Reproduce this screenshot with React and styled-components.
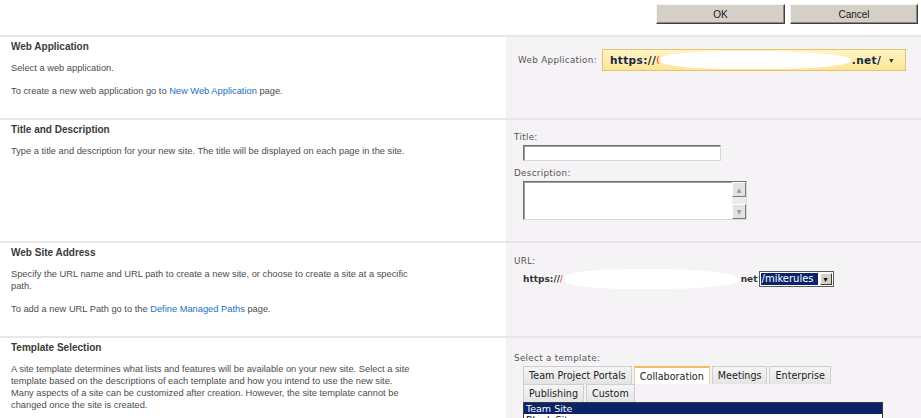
import styled, { createGlobalStyle } from 'styled-components';

const GlobalStyle = createGlobalStyle`
    body {
        margin: 0;
        background: #FFFFFF;
        font-family: 'Liberation Sans', Arial, sans-serif;
    }
`;

export default function App() {
    return (
        <Page>
            <GlobalStyle />
            <TopBar>
                <Button>OK</Button>
                <Button wide>Cancel</Button>
            </TopBar>

            <Section height={83}>
                <Left>
                    <Heading>Web Application</Heading>
                    <Text>Select a web application.</Text>
                    <Text>To create a new web application go to <Link>New Web Application</Link> page.</Text>
                </Left>
                <Right>
                    <InlineRow top={12}>
                        <Label>Web Application:</Label>
                        <AppSelect>
                            <strong>https://</strong>
                            <Red>(</Red>
                            <Blot width={190} />
                            <strong>.net/</strong>
                            <Caret>▾</Caret>
                        </AppSelect>
                    </InlineRow>
                </Right>
            </Section>

            <Section height={123}>
                <Left>
                    <Heading>Title and Description</Heading>
                    <Text>Type a title and description for your new site. The title will be displayed on each page in the site.</Text>
                </Left>
                <Right>
                    <Label block top={11}>Title:</Label>
                    <TextInput />
                    <Label block top={6}>Description:</Label>
                    <TextArea>
                        <Scroll>
                            <ScrollBtn>▲</ScrollBtn>
                            <ScrollBtn>▼</ScrollBtn>
                        </Scroll>
                    </TextArea>
                </Right>
            </Section>

            <Section height={95}>
                <Left>
                    <Heading>Web Site Address</Heading>
                    <Text>Specify the URL name and URL path to create a new site, or choose to create a site at a specific<br />path.</Text>
                    <Text>To add a new URL Path go to the <Link>Define Managed Paths</Link> page.</Text>
                </Left>
                <Right>
                    <Label block top={12}>URL:</Label>
                    <UrlRow>
                        <UrlBase>https://</UrlBase>
                        <Red small>/</Red>
                        <Blot width={176} tall />
                        <UrlBase>net</UrlBase>
                        <PathSelect>
                            <Picked>/mikerules</Picked>
                            <DropBtn>▾</DropBtn>
                        </PathSelect>
                    </UrlRow>
                </Right>
            </Section>

            <Section height={90}>
                <Left>
                    <Heading>Template Selection</Heading>
                    <Text>A site template determines what lists and features will be available on your new site. Select a site<br />template based on the descriptions of each template and how you intend to use the new site.<br />Many aspects of a site can be customized after creation. However, the site template cannot be<br />changed once the site is created.</Text>
                </Left>
                <Right>
                    <Label block top={14}>Select a template:</Label>
                    <TabArea>
                        <Tabs>
                            <Tab>Team Project Portals</Tab>
                            <Tab active>Collaboration</Tab>
                            <Tab>Meetings</Tab>
                            <Tab>Enterprise</Tab>
                        </Tabs>
                        <Tabs>
                            <Tab>Publishing</Tab>
                            <Tab>Custom</Tab>
                        </Tabs>
                    </TabArea>
                    <ListBox>
                        <Option selected>Team Site</Option>
                        <Option>Blank Site</Option>
                    </ListBox>
                </Right>
            </Section>
        </Page>
    );
}

const Page = styled.div`
    width: 921px;
    height: 418px;
    overflow: hidden;
    background: #FFFFFF;
`;

const TopBar = styled.div`
    height: 35px;
    display: flex;
    justify-content: flex-end;
    align-items: flex-start;
    gap: 5px;
    padding: 4px 3px 0 0;
    box-sizing: border-box;
`;

const Button = styled.button`
    width: ${p => p.wide ? 128 : 129}px;
    height: 20px;
    padding: 0;
    background: #D4D0C8;
    border: 1px solid;
    border-color: #F4F3F0 #404040 #404040 #F4F3F0;
    box-shadow: inset -1px -1px 0 #8A8781;
    font-family: 'Liberation Sans', Arial, sans-serif;
    font-size: 10px;
    color: #1A1A1A;
`;

const Section = styled.div`
    display: grid;
    grid-template-columns: 506px 1fr;
    height: ${p => p.height}px;
    box-sizing: border-box;
    border-top: 2px solid #E8E6E8;
`;

const Left = styled.div`
    padding: 3px 11px 0 11px;
    color: #4A4A4A;
`;

const Heading = styled.div`
    font-weight: 700;
    font-size: 10px;
    line-height: 14px;
    color: #3A3A3A;
    margin-bottom: 8px;
`;

const Text = styled.p`
    margin: 0 0 11px;
    font-size: 9.3px;
    line-height: 12px;
    color: #4D4D4D;
`;

const Link = styled.span`
    color: #1F6FBF;
`;

const Right = styled.div`
    background: #F6F3F7;
    padding: 0 0 0 8px;
    font-family: 'DejaVu Sans', Verdana, sans-serif;
    font-size: 8.8px;
    color: #555555;
`;

const InlineRow = styled.div`
    display: flex;
    align-items: center;
    gap: 5px;
    margin: ${p => p.top}px 0 0 4px;
`;

const Label = styled.div`
    display: ${p => p.block ? 'block' : 'inline-block'};
    margin-top: ${p => p.top || 0}px;
    line-height: 12px;
    letter-spacing: 0.3px;
    color: #555555;
`;

const AppSelect = styled.div`
    width: 304px;
    height: 22px;
    box-sizing: border-box;
    display: flex;
    align-items: center;
    padding-left: 7px;
    border: 1px solid #E3C46E;
    background: linear-gradient(#FFF4C4, #FDE597);
    font-family: 'DejaVu Sans', Verdana, sans-serif;
    font-size: 10.5px;
    color: #13294B;
    strong { font-weight: 700; letter-spacing: 0.4px; }
`;

const Red = styled.span`
    color: #E0261E;
    font-size: ${p => p.small ? 8 : 9}px;
`;

const Blot = styled.span`
    display: inline-block;
    width: ${p => p.width}px;
    height: ${p => p.tall ? 20 : 18}px;
    background: #FFFFFF;
    border-radius: 40% 50% 45% 40%;
    margin: 0 1px;
`;

const Caret = styled.span`
    margin-left: 8px;
    font-size: 8px;
    color: #333333;
`;

const TextInput = styled.div`
    width: 198px;
    height: 16px;
    margin: 2px 0 0 9px;
    box-sizing: border-box;
    background: #FFFFFF;
    border: 1px solid;
    border-color: #6F6F6F #D8D8D8 #D8D8D8 #6F6F6F;
    box-shadow: inset 1px 1px 0 #A0A0A0;
`;

const TextArea = styled.div`
    width: 224px;
    height: 39px;
    margin: 2px 0 0 9px;
    box-sizing: border-box;
    display: flex;
    justify-content: flex-end;
    background: #FFFFFF;
    border: 1px solid;
    border-color: #6F6F6F #D8D8D8 #D8D8D8 #6F6F6F;
    box-shadow: inset 1px 1px 0 #A0A0A0;
`;

const Scroll = styled.div`
    width: 14px;
    display: flex;
    flex-direction: column;
    justify-content: space-between;
    background: #EDEBEA;
`;

const ScrollBtn = styled.div`
    height: 13px;
    display: flex;
    align-items: center;
    justify-content: center;
    background: #E4E2DE;
    border: 1px solid;
    border-color: #FFFFFF #7A7A7A #7A7A7A #FFFFFF;
    font-size: 6px;
    color: #9A9A9A;
`;

const UrlRow = styled.div`
    display: flex;
    align-items: center;
    margin: 1px 0 0 9px;
    height: 22px;
`;

const UrlBase = styled.span`
    font-family: 'DejaVu Sans', Verdana, sans-serif;
    font-weight: 700;
    font-size: 9px;
    color: #333333;
`;

const PathSelect = styled.div`
    display: flex;
    align-items: center;
    margin-left: 1px;
    height: 16px;
    box-sizing: border-box;
    border: 1px solid #5A5A5A;
    background: #FFFFFF;
    padding: 1px;
`;

const Picked = styled.span`
    background: #0A246A;
    color: #FFFFFF;
    font-size: 10px;
    line-height: 12px;
    padding: 0 1px;
    width: 55px;
`;

const DropBtn = styled.span`
    width: 12px;
    height: 12px;
    margin-left: 2px;
    display: flex;
    align-items: center;
    justify-content: center;
    background: #D4D0C8;
    border: 1px solid;
    border-color: #FFFFFF #404040 #404040 #FFFFFF;
    box-sizing: border-box;
    font-size: 8px;
    color: #000000;
`;

const TabArea = styled.div`
    margin: 2px 0 0 9px;
`;

const Tabs = styled.div`
    display: flex;
    gap: 2px;
`;

const Tab = styled.div`
    height: 18px;
    box-sizing: border-box;
    padding: 0 5px;
    display: flex;
    align-items: center;
    font-size: 9.6px;
    color: #222222;
    background: ${p => p.active ? '#FFFFFF' : 'linear-gradient(#F5F5F5, #E4E4E4)'};
    border: 1px solid ${p => p.active ? '#E8D3A0' : '#CFCFCF'};
    border-top: ${p => p.active ? '2px solid #F0C060' : '1px solid #CFCFCF'};
    border-bottom: none;
`;

const ListBox = styled.div`
    width: 358px;
    margin-left: 9px;
    height: 20px;
    border: 1px solid #3A3A3A;
    border-bottom: none;
    background: #FFFFFF;
    overflow: hidden;
`;

const Option = styled.div`
    font-size: 9.5px;
    line-height: 11px;
    padding-left: 2px;
    background: ${p => p.selected ? '#0A246A' : 'transparent'};
    color: ${p => p.selected ? '#FFFFFF' : '#000000'};
`;
